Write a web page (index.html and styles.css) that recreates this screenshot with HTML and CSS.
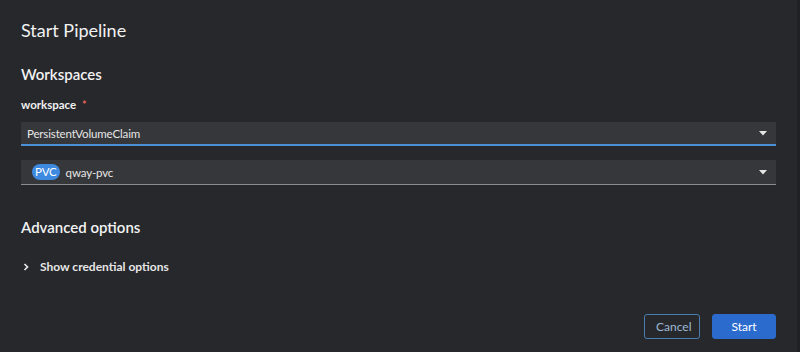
FILE: index.html
```html
<!DOCTYPE html>
<html>
<head>
<meta charset="utf-8">
<link rel="stylesheet" href="styles.css">
</head>
<body>
<div class="modal">
  <div class="content">
    <h1 class="title">Start Pipeline</h1>
    <h2 class="section">Workspaces</h2>
    <label class="label">workspace <span class="req">*</span></label>
    <div class="select active">
      <span class="value">PersistentVolumeClaim</span>
      <svg class="caret" width="8" height="5" viewBox="0 0 8 5"><path d="M0 0h8L4 4.5z" fill="#e6e6e6"/></svg>
    </div>
    <div class="select">
      <span class="value"><span class="badge">PVC</span>qway-pvc</span>
      <svg class="caret" width="8" height="5" viewBox="0 0 8 5"><path d="M0 0h8L4 4.5z" fill="#e6e6e6"/></svg>
    </div>
    <h2 class="section adv">Advanced options</h2>
    <div class="toggle">
      <svg class="chev" width="8" height="10" viewBox="0 0 8 10"><path d="M2.5 2l3 3-3 3" fill="none" stroke="#e6e6e6" stroke-width="1.7"/></svg>
      <span>Show credential options</span>
    </div>
  </div>
  <div class="footer">
    <button class="btn secondary">Cancel</button>
    <button class="btn primary">Start</button>
  </div>
</div>
<div class="scroll"></div>
</body>
</html>
```
FILE: styles.css
```css
html, body {
  margin: 0;
  padding: 0;
  width: 800px;
  height: 352px;
  overflow: hidden;
  background: #26282c;
  font-family: Lato, "Noto Sans", "Liberation Sans", sans-serif;
  color: #e8e8e8;
}
body {
  display: flex;
}
.modal {
  flex: 1;
  display: flex;
  flex-direction: column;
  padding: 0 21px 0 21px;
  height: 352px;
  box-sizing: border-box;
}
.scroll {
  width: 3px;
  background: #1f2124;
}
.content {
  flex: 1;
}
.title {
  margin: 17px 0 0;
  font-size: 18px;
  font-weight: 400;
  line-height: 26px;
  color: #f2f2f2;
}
.section {
  margin: 20px 0 0;
  font-size: 15px;
  font-weight: 600;
  line-height: 22px;
  color: #f2f2f2;
}
.label {
  display: block;
  margin-top: 12px;
  font-size: 11.5px;
  font-weight: 700;
  line-height: 16px;
  color: #f0f0f0;
}
.req {
  color: #e0635a;
  margin-left: 3px;
  font-size: 11px;
}
.select {
  margin-top: 9px;
  height: 24px;
  background: #36373a;
  border-bottom: 1px solid #8a8d90;
  display: flex;
  align-items: center;
  justify-content: space-between;
  padding: 0 9px 0 6px;
  font-size: 11.5px;
  letter-spacing: -0.15px;
  color: #e6e6e6;
}
.select.active {
  border-bottom: 2px solid #4b8fd6;
  height: 22px;
}
.select + .select {
  margin-top: 14px;
}
.value {
  display: flex;
  align-items: center;
}
.badge {
  background: #3d8ae0;
  color: #fff;
  border-radius: 9px;
  padding: 0 3px;
  font-size: 11.5px;
  line-height: 16px;
  margin: 0 6px 0 5px;
}
.caret {
  margin-top: 1px;
}
.adv {
  margin-top: 31px;
}
.toggle {
  margin-top: 21px;
  display: flex;
  align-items: center;
  gap: 10px;
  font-size: 12px;
  font-weight: 700;
  color: #e6e6e6;
  padding-left: 1px;
}
.footer {
  display: flex;
  justify-content: flex-end;
  gap: 12px;
  padding-bottom: 13px;
}
.btn {
  font-family: inherit;
  font-size: 12px;
  height: 25px;
  border-radius: 3px;
  padding: 0 11px;
  cursor: pointer;
}
.secondary {
  background: transparent;
  border: 1px solid #4b7eb0;
  color: #9db8d4;
  width: 56px;
}
.primary {
  background: #2b6bce;
  border: 1px solid #2b6bce;
  color: #fff;
  width: 64px;
}
```
